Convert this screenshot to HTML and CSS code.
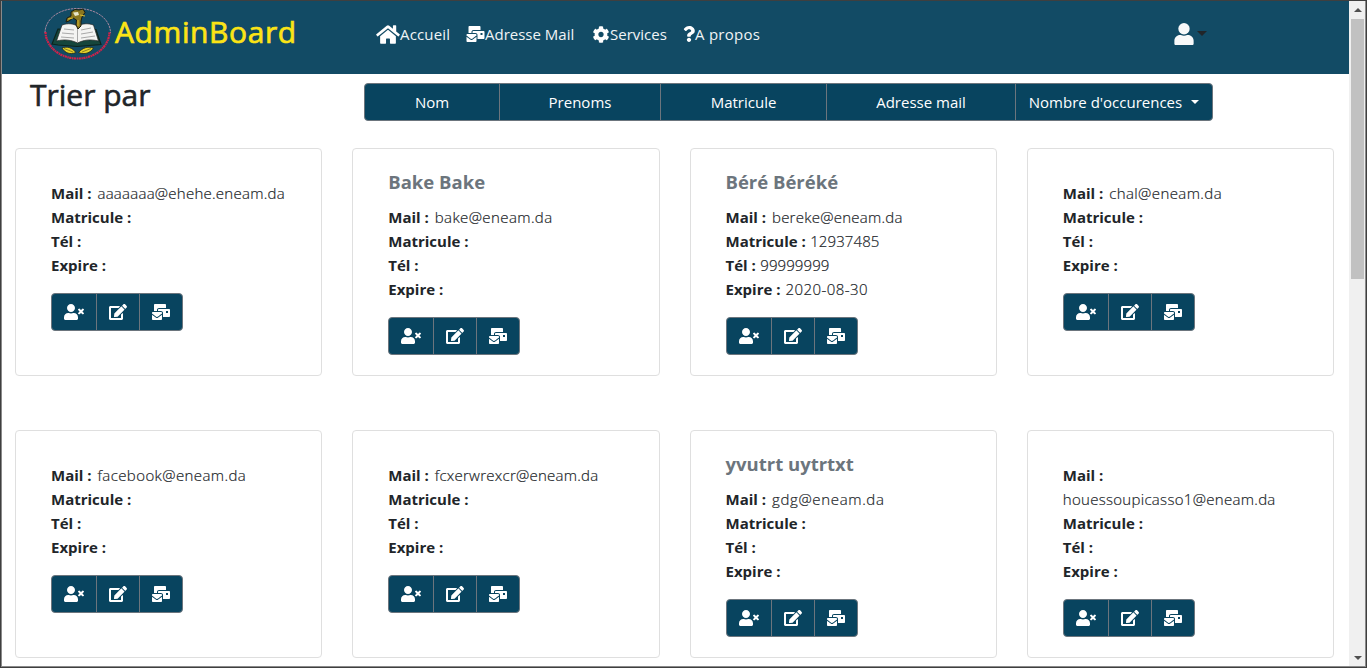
FILE: index.html
```
<!DOCTYPE html>
<html lang="fr">
<head>
<meta charset="utf-8">
<title>AdminBoard</title>
<link rel="stylesheet" href="styles.css">
</head>
<body>
<svg class="sprite" aria-hidden="true">
  <symbol id="home" viewBox="0 0 576 512"><path d="M280.37 148.26L96 300.11V464a16 16 0 0 0 16 16l112.06-.29a16 16 0 0 0 15.92-16V368a16 16 0 0 1 16-16h64a16 16 0 0 1 16 16v95.64a16 16 0 0 0 16 16.05L464 480a16 16 0 0 0 16-16V300L295.67 148.26a12.19 12.19 0 0 0-15.3 0zM571.6 251.47L488 182.56V44.05a12 12 0 0 0-12-12h-56a12 12 0 0 0-12 12v72.61L318.47 43a48 48 0 0 0-61 0L4.34 251.47a12 12 0 0 0-1.6 16.9l25.5 31A12 12 0 0 0 45.15 301l235.22-193.74a12.19 12.19 0 0 1 15.3 0L530.9 301a12 12 0 0 0 16.9-1.6l25.5-31a12 12 0 0 0-1.7-16.93z"/></symbol>
  <symbol id="mails" viewBox="0 0 576 512"><path d="M160 448c-25.6 0-51.2-22.4-64-32-64-44.8-83.2-60.8-96-70.4V480c0 17.67 14.33 32 32 32h256c17.67 0 32-14.33 32-32V345.6c-12.8 9.6-32 25.6-96 70.4-12.8 9.6-38.4 32-64 32zm128-192H32c-17.67 0-32 14.33-32 32v16c25.6 19.2 22.4 19.2 115.2 86.4 9.6 6.4 28.8 25.6 44.8 25.6s35.2-19.2 44.8-22.4c92.8-67.2 89.6-67.2 115.2-86.4V288c0-17.67-14.33-32-32-32zm256-96H224c-17.67 0-32 14.33-32 32v32h96c33.21 0 60.59 25.42 63.71 57.82l.29-.22V416h192c17.67 0 32-14.33 32-32V192c0-17.67-14.33-32-32-32zm-32 128h-64v-64h64v64zm-352-96c0-35.29 28.71-64 64-64h224V32c0-17.67-14.33-32-32-32H96C78.33 0 64 14.33 64 32v192h96v-32z"/></symbol>
  <symbol id="cog" viewBox="0 0 512 512"><path d="M487.4 315.7l-42.6-24.6c4.3-23.2 4.3-47 0-70.2l42.6-24.6c4.9-2.8 7.1-8.6 5.5-14-11.1-35.6-30-67.8-54.7-94.6-3.8-4.1-10-5.1-14.8-2.3L380.8 110c-17.9-15.4-38.5-27.3-60.8-35.1V25.8c0-5.6-3.9-10.5-9.4-11.7-36.7-8.2-74.3-7.8-109.2 0-5.5 1.2-9.4 6.1-9.4 11.7V75c-22.2 7.9-42.8 19.8-60.8 35.1L88.7 85.5c-4.9-2.8-11-1.9-14.8 2.3-24.7 26.7-43.6 58.9-54.7 94.6-1.7 5.4.6 11.2 5.5 14L67.3 221c-4.3 23.2-4.3 47 0 70.2l-42.6 24.6c-4.9 2.8-7.1 8.6-5.5 14 11.1 35.6 30 67.8 54.7 94.6 3.8 4.1 10 5.1 14.8 2.3l42.6-24.6c17.9 15.4 38.5 27.3 60.8 35.1v49.2c0 5.6 3.9 10.5 9.4 11.7 36.7 8.2 74.3 7.8 109.2 0 5.5-1.2 9.4-6.1 9.4-11.7v-49.2c22.2-7.9 42.8-19.8 60.8-35.1l42.6 24.6c4.9 2.8 11 1.9 14.8-2.3 24.7-26.7 43.6-58.9 54.7-94.6 1.5-5.5-.7-11.3-5.6-14.1zM256 336c-44.1 0-80-35.9-80-80s35.9-80 80-80 80 35.9 80 80-35.9 80-80 80z"/></symbol>
  <symbol id="question" viewBox="0 0 384 512"><path d="M202.021 0C122.202 0 70.503 32.703 29.914 91.026c-7.363 10.58-5.093 25.086 5.178 32.874l43.138 32.709c10.373 7.865 25.132 6.026 33.253-4.148 25.049-31.381 43.63-49.449 82.757-49.449 30.764 0 68.816 19.799 68.816 49.631 0 22.552-18.617 34.134-48.993 51.164-35.423 19.86-82.299 44.576-82.299 106.405V320c0 13.255 10.745 24 24 24h72.471c13.255 0 24-10.745 24-24v-5.773c0-42.86 125.268-44.645 125.268-160.627C377.504 66.256 286.902 0 202.021 0zM192 373.459c-38.196 0-69.271 31.075-69.271 69.271 0 38.195 31.075 69.27 69.271 69.27s69.271-31.075 69.271-69.271-31.075-69.27-69.271-69.27z"/></symbol>
  <symbol id="user" viewBox="0 0 448 512"><circle cx="224" cy="134" r="132"/><path d="M314 280h-17c-22 12-47 18-73 18s-51-6-73-18h-17C60 280 0 340 0 414v66c0 18 14 32 32 32h384c18 0 32-14 32-32v-66c0-74-60-134-134-134z"/></symbol>
  <symbol id="user-x" viewBox="0 0 640 512"><path d="M589.6 240l45.6-45.6c6.3-6.3 6.3-16.5 0-22.8l-22.8-22.8c-6.3-6.3-16.5-6.3-22.8 0L544 194.4l-45.6-45.6c-6.3-6.3-16.5-6.3-22.8 0l-22.8 22.8c-6.3 6.3-6.3 16.5 0 22.8l45.6 45.6-45.6 45.6c-6.3 6.3-6.3 16.5 0 22.8l22.8 22.8c6.3 6.3 16.5 6.3 22.8 0l45.6-45.6 45.6 45.6c6.3 6.3 16.5 6.3 22.8 0l22.8-22.8c6.3-6.3 6.3-16.5 0-22.8L589.6 240zM224 256c70.7 0 128-57.3 128-128S294.700 0 224 0 96 57.3 96 128s57.3 128 128 128zm89.6 32h-16.7c-22.2 10.2-46.9 16-72.9 16s-50.6-5.800-72.9-16h-16.7C60.2 288 0 348.200 0 422.400V464c0 26.500 21.500 48 48 48h352c26.500 0 48-21.500 48-48v-41.600c0-74.200-60.200-134.400-134.400-134.400z"/></symbol>
  <symbol id="edit" viewBox="0 0 576 512"><path d="M402.6 83.2l90.2 90.2c3.8 3.8 3.8 10 0 13.8L274.4 405.6l-92.8 10.3c-12.4 1.4-22.9-9.1-21.5-21.5l10.3-92.8L388.8 83.2c3.8-3.8 10-3.8 13.8 0zm162-22.9l-48.8-48.8c-15.2-15.2-39.9-15.2-55.2 0l-35.4 35.4c-3.8 3.8-3.8 10 0 13.8l90.2 90.2c3.8 3.8 10 3.8 13.8 0l35.4-35.4c15.2-15.3 15.2-40 0-55.2zM384 346.2V448H64V128h229.8c3.2 0 6.2-1.3 8.5-3.5l40-40c7.6-7.6 2.2-20.5-8.5-20.5H48C21.5 64 0 85.5 0 112v352c0 26.5 21.5 48 48 48h352c26.5 0 48-21.5 48-48V306.2c0-10.7-12.9-16-20.5-8.5l-40 40c-2.2 2.3-3.5 5.3-3.5 8.5z"/></symbol>
</svg>

<div class="viewport">
  <div class="page">
    <header class="navbar">
      <a class="brand">
        <svg class="logo" viewBox="0 0 68 54">
          <path d="M1 26C1 12 15 1.500 33.500 1.500S66.500 12 66.500 26" fill="none" stroke="#a3869e" stroke-width="1" stroke-dasharray="2.500 .7"/>
          <path d="M1.500 25C2 40 16 51.500 33.500 51.500S65 40 65.500 25" fill="none" stroke="#d0224a" stroke-width="2.200" stroke-dasharray="2.200 .6 1.400 .5"/>
          <path d="M14 22l-6 15 6 1 19 1.500 24-2-5-15z" fill="#15463c" stroke="#0c241e" stroke-width="1.200"/>
          <path d="M18 18c6-2 11-1.500 15.500 1 5-2.500 10-3 16-1l5 16c-9-2-15-1-21 2-6-3-13-4-21-2z" fill="#f4f4f2" stroke="#222" stroke-width=".7"/>
          <path d="M33.500 19v17M20 22l10 1M18 26l12 1M17 30l13 1M37 23l10-2M37 27l12-2M37 31l14-2" fill="none" stroke="#888" stroke-width=".7"/>
          <path d="M27 5l4-2.500 4 .5 4-1 2 3.500-3 4.500-1 4v5l-3 3-2-4 .5-5-3.500-2-4 3-3 1 1-4 4-2z" fill="#8a7720" stroke="#1b1d12" stroke-width="1"/>
          <path d="M29 5.500l5-.5 1 3-4 1z" fill="#e9e7cb"/>
          <path d="M36 8l5 1M24 12l5-1M34 13v6" stroke="#d8bc2c" stroke-width="1"/>
          <path d="M18 41c5-2 10-.5 14 4.500-6 2.500-11 .5-14-4.500zM49.500 41c-6-2-11 0-15 4.500 6 2.500 12 .5 15-4.500z" fill="#e5d229" stroke="#242818" stroke-width=".8"/>
          <path d="M20 41.500l9 3.500M47 41.500l-9 3.500" stroke="#675d19" stroke-width=".7"/>
        </svg>
        <span class="brand-name">AdminBoard</span>
      </a>
      <nav class="menu">
        <a class="link l1"><svg class="i-home"><use href="#home"/></svg><span>Accueil</span></a>
        <a class="link l2"><svg class="i-mail"><use href="#mails"/></svg><span>Adresse Mail</span></a>
        <a class="link l3"><svg class="i-cog"><use href="#cog"/></svg><span>Services</span></a>
        <a class="link l4"><svg class="i-q"><use href="#question"/></svg><span>A propos</span></a>
      </nav>
      <a class="account"><svg class="i-user"><use href="#user"/></svg><i class="caret dark"></i></a>
    </header>

    <div class="toolbar">
      <h2>Trier par</h2>
      <div class="tabs">
        <a class="t1">Nom</a><a class="t2">Prenoms</a><a class="t3">Matricule</a><a class="t4">Adresse mail</a><a class="t5"><span>Nombre d'occurences</span><i class="caret"></i></a>
      </div>
    </div>

    <main class="cards">
      <article class="card">
        <h5></h5>
        <p><b>Mail :</b> <span class="mail">aaaaaaa@ehehe.eneam.da</span><br><b>Matricule :</b><br><b>Tél :</b><br><b>Expire :</b></p>
        <div class="actions"><a class="wide"><svg><use href="#user-x"/></svg></a><a><svg><use href="#edit"/></svg></a><a><svg><use href="#mails"/></svg></a></div>
      </article>
      <article class="card">
        <h5>Bake Bake</h5>
        <p><b>Mail :</b> <span class="mail short">bake@eneam.da</span><br><b>Matricule :</b><br><b>Tél :</b><br><b>Expire :</b></p>
        <div class="actions"><a class="wide"><svg><use href="#user-x"/></svg></a><a><svg><use href="#edit"/></svg></a><a><svg><use href="#mails"/></svg></a></div>
      </article>
      <article class="card">
        <h5>Béré Béréké</h5>
        <p><b>Mail :</b> <span class="mail">bereke@eneam.da</span><br><b>Matricule :</b> <span class="num">12937485</span><br><b>Tél :</b> <span class="num">99999999</span><br><b>Expire :</b> <span class="date">2020-08-30</span></p>
        <div class="actions"><a class="wide"><svg><use href="#user-x"/></svg></a><a><svg><use href="#edit"/></svg></a><a><svg><use href="#mails"/></svg></a></div>
      </article>
      <article class="card">
        <h5></h5>
        <p><b>Mail :</b> <span class="mail short">chal@eneam.da</span><br><b>Matricule :</b><br><b>Tél :</b><br><b>Expire :</b></p>
        <div class="actions"><a class="wide"><svg><use href="#user-x"/></svg></a><a><svg><use href="#edit"/></svg></a><a><svg><use href="#mails"/></svg></a></div>
      </article>
      <article class="card">
        <h5></h5>
        <p><b>Mail :</b> <span class="mail short">facebook@eneam.da</span><br><b>Matricule :</b><br><b>Tél :</b><br><b>Expire :</b></p>
        <div class="actions"><a class="wide"><svg><use href="#user-x"/></svg></a><a><svg><use href="#edit"/></svg></a><a><svg><use href="#mails"/></svg></a></div>
      </article>
      <article class="card">
        <h5></h5>
        <p><b>Mail :</b> <span class="mail">fcxerwrexcr@eneam.da</span><br><b>Matricule :</b><br><b>Tél :</b><br><b>Expire :</b></p>
        <div class="actions"><a class="wide"><svg><use href="#user-x"/></svg></a><a><svg><use href="#edit"/></svg></a><a><svg><use href="#mails"/></svg></a></div>
      </article>
      <article class="card">
        <h5>yvutrt uytrtxt</h5>
        <p><b>Mail :</b> <span class="mail shorter">gdg@eneam.da</span><br><b>Matricule :</b><br><b>Tél :</b><br><b>Expire :</b></p>
        <div class="actions"><a class="wide"><svg><use href="#user-x"/></svg></a><a><svg><use href="#edit"/></svg></a><a><svg><use href="#mails"/></svg></a></div>
      </article>
      <article class="card">
        <h5></h5>
        <p><b>Mail :</b><br><span class="mail own-line">houessoupicasso1@eneam.da</span><br><b>Matricule :</b><br><b>Tél :</b><br><b>Expire :</b></p>
        <div class="actions"><a class="wide"><svg><use href="#user-x"/></svg></a><a><svg><use href="#edit"/></svg></a><a><svg><use href="#mails"/></svg></a></div>
      </article>
    </main>
  </div>
  <div class="scrollbar"><i class="up"></i><div class="thumb"></div><i class="down"></i></div>
  <div class="frame"></div>
</div>
</body>
</html>
```
FILE: styles.css
```
* { box-sizing: border-box; }
body {
  margin: 0;
  font: 15px/24px "Open Sans", "Noto Sans", sans-serif;
  color: #212529;
  background: #fff;
  overflow: hidden;
}
svg { display: block; fill: currentColor; flex: none; }
.sprite { position: absolute; width: 0; height: 0; }
.viewport { position: relative; display: flex; width: 1367px; height: 668px; overflow: hidden; }
.page { width: 1349px; flex: none; }

/* window border drawn over the page */
.frame {
  position: absolute;
  inset: 0;
  border: 1px solid #3f3f3f;
  box-shadow: inset 1px 0 #8a8a8a, inset -1px -1px #8a8a8a;
  pointer-events: none;
}

.navbar { display: flex; height: 74px; background: #124b65; color: #fff; }
.brand { display: flex; width: 376px; padding-left: 44px; flex: none; }
.logo { width: 68px; height: 54px; margin-top: 7px; }
.brand-name { margin: 12px 0 0 3px; font-size: 30px; line-height: 40px; letter-spacing: .6px; color: #fbe416; -webkit-text-stroke: .7px #fbe416; }
.menu { display: flex; height: 68px; width: 797px; flex: none; }
.link { display: flex; align-items: center; white-space: nowrap; color: #f0f4f6; }
.link svg { color: #fff; }
.link span { margin-top: -1px; }
.l1 { width: 90px; letter-spacing: .15px; }
.l2 { width: 126px; }
.l3 { width: 91px; }
.i-home { width: 24px; height: 21px; }
.i-mail { width: 19px; height: 16px; }
.i-cog { width: 18px; height: 17px; }
.i-q { width: 12px; height: 16px; }
.l4 { letter-spacing: .25px; }
.account { display: flex; align-items: center; height: 68px; padding-left: 1px; color: #f8f9fa; }
.i-user { width: 20px; height: 22px; }
.caret { border: 4.800px solid transparent; border-top-color: #fff; border-bottom: 0; }
.caret.dark { margin: 0 0 1px 3px; border-width: 5px 5px 0; border-top-color: #212529; }

.toolbar { display: flex; height: 74px; padding-left: 30px; }
h2 { width: 334px; margin: 0; font-size: 30px; font-weight: 400; line-height: 42px; -webkit-text-stroke: .6px #212529; }
.tabs { display: flex; width: 849px; height: 38px; margin-top: 9px; border: 1px solid #6c757d; border-radius: 4px; overflow: hidden; background: #08445f; color: #fff; }
.tabs a { display: flex; align-items: center; justify-content: center; border-right: 1px solid #6c757d; white-space: nowrap; }
.tabs .t1 { width: 135px; }
.tabs .t2 { width: 161px; }
.tabs .t3 { width: 166px; }
.tabs .t4 { width: 189px; }
.tabs .t5 { flex: 1; border: 0; gap: 9px; }

.cards { display: grid; grid-template-columns: repeat(4, 1fr); grid-auto-rows: 228px; gap: 54px 30px; padding: 0 15px; }
.card { border: 1px solid #dfdfdf; border-radius: 4px; padding: 21px 35px; }
.card h5 { margin: 0 0 11px; font-size: 18.500px; line-height: 24px; font-weight: 700; color: #6c757d; }
.card p { margin: 0 0 16px; font-weight: 300; white-space: nowrap; }
.card b { font-weight: 700; }
.card p span { -webkit-text-stroke: .2px #212529; }
.mail { margin-left: 2px; letter-spacing: .25px; }
.mail.short { letter-spacing: .4px; }
.mail.shorter { letter-spacing: .65px; }
.mail.own-line { margin-left: 0; letter-spacing: .3px; }
.num { margin-left: .5px; letter-spacing: .1px; }
.date { margin-left: 1px; letter-spacing: .45px; }
.actions { display: inline-flex; height: 38px; border: 1px solid #6c757d; border-radius: 4px; overflow: hidden; background: #08445f; color: #fff; }
.actions a { display: flex; align-items: center; justify-content: center; width: 43px; border-right: 1px solid #6c757d; }
.actions a.wide { width: 45px; }
.actions a:last-child { width: 42px; border: 0; }
.actions svg { width: 18px; height: 16px; }
.actions .wide svg { width: 20px; }

.scrollbar { display: flex; flex-direction: column; align-items: center; width: 17px; flex: none; background: #f0f0f0; }
.up, .down { border: 4px solid transparent; }
.up { margin-top: 8px; border-top: 0; border-bottom-color: #505050; }
.thumb { width: 13px; height: 260px; margin-top: 7px; background: #c1c1c1; }
.down { margin-top: auto; margin-bottom: 8px; border-bottom: 0; border-top-color: #505050; }
```
